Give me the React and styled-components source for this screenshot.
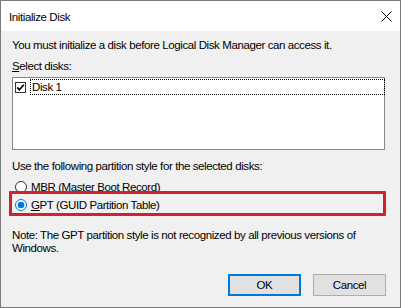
import styled, { createGlobalStyle } from "styled-components";

const GlobalStyle = createGlobalStyle`
  html, body {
    margin: 0;
    padding: 0;
    background: #2b3346;
  }
  body {
    font-family: "Liberation Sans", Arial, sans-serif;
  }
`;

const Window = styled.div`
  width: 401px;
  height: 308px;
  box-sizing: border-box;
  border: 1px solid #7a7a7a;
  background: #f0f0f0;
  display: flex;
  flex-direction: column;
  font-size: 11.5px;
  letter-spacing: -0.4px;
  color: #000;
`;

const TitleBar = styled.div`
  height: 30px;
  flex-shrink: 0;
  background: #fff;
  display: flex;
  align-items: center;
  justify-content: space-between;
  padding: 0 8px 0 8px;
`;

const Title = styled.span`
  line-height: 14px;
  margin-top: 1px;
`;

const Body = styled.div`
  flex: 1;
  display: flex;
  flex-direction: column;
  padding: 7px 15px 11px 11px;
`;

const Line = styled.div`
  line-height: ${(p) => p.$lh || 14}px;
  margin-top: ${(p) => p.$mt || 0}px;
`;

const Key = styled.span`
  text-decoration: underline;
  text-underline-offset: 1px;
`;

const ListBox = styled.div`
  margin-top: 4px;
  height: 73px;
  box-sizing: border-box;
  background: #fff;
  border: 1px solid #828790;
  padding-top: 1px;
`;

const ListItem = styled.div`
  display: flex;
  align-items: center;
  padding-left: 2px;
  gap: 4px;
`;

const ItemLabel = styled.div`
  flex: 1;
  height: 16px;
  box-sizing: border-box;
  border: 1px dotted #000;
  margin-right: -1px;
  padding-left: 1px;
  line-height: 14px;
`;

const Options = styled.div`
  margin-top: 6px;
  display: flex;
  flex-direction: column;
  gap: 2px;
`;

const Option = styled.div`
  position: relative;
  height: 16px;
  display: flex;
  align-items: center;
  gap: 4px;
  padding-left: 3px;
  line-height: 14px;
`;

const Highlight = styled.div`
  position: absolute;
  left: -3px;
  right: -1px;
  top: -6px;
  bottom: -3px;
  border: 3px solid #d2202f;
  border-radius: 1px;
  pointer-events: none;
`;

const Buttons = styled.div`
  margin-top: auto;
  display: flex;
  justify-content: flex-end;
  gap: 12px;
  margin-right: -1px;
`;

const Button = styled.button`
  width: 73px;
  height: 22px;
  box-sizing: border-box;
  background: #e1e1e1;
  border: ${(p) => (p.$primary ? "2px solid #0078d7" : "1px solid #adadad")};
  font-family: inherit;
  font-size: 11.5px;
  letter-spacing: -0.4px;
  color: #000;
  padding: 0;
`;

function CloseIcon() {
  return (
    <svg width="11" height="11" viewBox="0 0 11 11">
      <path d="M0.5 0.5 L10.5 10.5 M10.5 0.5 L0.5 10.5" stroke="#000" strokeWidth="1" fill="none" />
    </svg>
  );
}

function CheckBox() {
  return (
    <svg width="11" height="11" viewBox="0 0 11 11">
      <rect x="0.5" y="0.5" width="10" height="10" fill="#fff" stroke="#333" />
      <path d="M2.2 5.4 L4.4 7.8 L8.8 2.8" stroke="#000" strokeWidth="1.7" fill="none" />
    </svg>
  );
}

function Radio({ checked }) {
  return (
    <svg width="12" height="12" viewBox="0 0 12 12">
      <circle cx="6" cy="6" r="5.5" fill="#fff" stroke={checked ? "#0078d7" : "#333"} />
      {checked && <circle cx="6" cy="6" r="3.3" fill="#0078d7" />}
    </svg>
  );
}

export default function App() {
  return (
    <>
      <GlobalStyle />
      <Window>
        <TitleBar>
          <Title>Initialize Disk</Title>
          <CloseIcon />
        </TitleBar>
        <Body>
          <Line>You must initialize a disk before Logical Disk Manager can access it.</Line>
          <Line $mt={7}>
            <Key>S</Key>elect disks:
          </Line>
          <ListBox>
            <ListItem>
              <CheckBox />
              <ItemLabel>Disk 1</ItemLabel>
            </ListItem>
          </ListBox>
          <Line $mt={9}>Use the following partition style for the selected disks:</Line>
          <Options>
            <Option>
              <Radio />
              <span>
                <Key>M</Key>BR (Master Boot Record)
              </span>
            </Option>
            <Option>
              <Radio checked />
              <span>
                <Key>G</Key>PT (GUID Partition Table)
              </span>
              <Highlight />
            </Option>
          </Options>
          <Line $mt={16} $lh={13}>
            Note: The GPT partition style is not recognized by all previous versions of Windows.
          </Line>
          <Buttons>
            <Button $primary>OK</Button>
            <Button>Cancel</Button>
          </Buttons>
        </Body>
      </Window>
    </>
  );
}
